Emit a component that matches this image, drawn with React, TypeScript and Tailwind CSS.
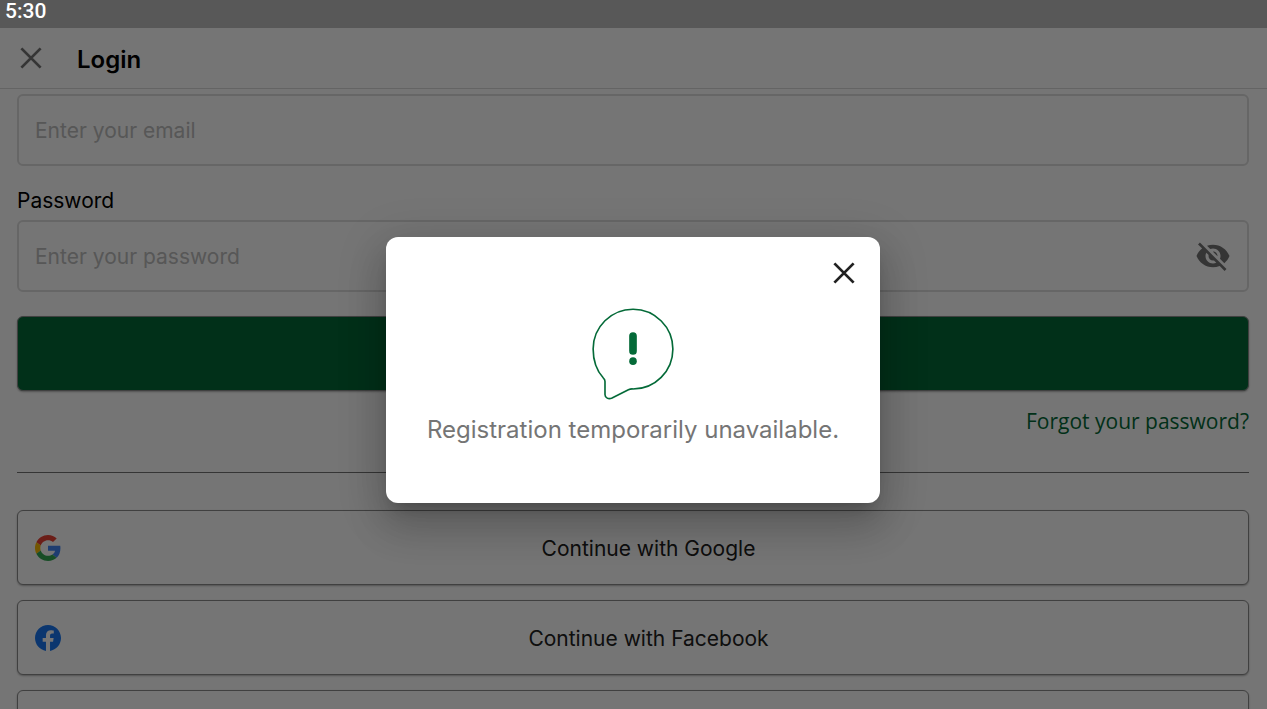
import { useState } from "react";
import type { ReactNode } from "react";

function CloseIcon({ className }: { className: string }) {
  return (
    <svg viewBox="0 0 24 24" className={className} fill="none" stroke="currentColor" strokeWidth="3" aria-hidden="true">
      <path d="M1.500 1.500 22.500 22.500M22.500 1.500 1.500 22.500" />
    </svg>
  );
}

function EyeOffIcon() {
  return (
    <svg viewBox="0 0 24 24" className="size-9" fill="currentColor" aria-hidden="true">
      <path d="M12 7c2.76 0 5 2.24 5 5 0 .65-.13 1.26-.36 1.83l2.92 2.92c1.51-1.26 2.7-2.89 3.43-4.75-1.73-4.39-6-7.5-11-7.5-1.4 0-2.74.25-3.98.7l2.16 2.16C10.74 7.13 11.35 7 12 7zM2 4.27l2.28 2.28.46.46C3.08 8.3 1.78 10.02 1 12c1.73 4.39 6 7.5 11 7.5 1.55 0 3.03-.3 4.38-.84l.42.42L19.73 22 21 20.73 3.27 3 2 4.27zM7.53 9.8l1.55 1.55c-.05.21-.08.43-.08.65 0 1.66 1.34 3 3 3 .22 0 .44-.03.65-.08l1.55 1.55c-.67.33-1.41.53-2.2.53-2.76 0-5-2.24-5-5 0-.79.2-1.53.53-2.2zm4.31-.78 3.15 3.15.02-.16c0-1.66-1.34-3-3-3l-.17.01z" />
    </svg>
  );
}

function GoogleIcon() {
  return (
    <svg viewBox="0 0 48 48" className="size-[26px]" aria-hidden="true">
      <path fill="#EA4335" d="M24 9.5c3.54 0 6.71 1.22 9.21 3.6l6.85-6.85C35.9 2.38 30.47 0 24 0 14.62 0 6.51 5.38 2.56 13.22l7.98 6.19C12.43 13.72 17.74 9.5 24 9.5z" />
      <path fill="#4285F4" d="M46.98 24.55c0-1.57-.15-3.09-.38-4.55H24v9.02h12.94c-.58 2.96-2.26 5.48-4.78 7.18l7.73 6c4.51-4.18 7.09-10.36 7.09-17.65z" />
      <path fill="#FBBC05" d="M10.53 28.59c-.48-1.45-.76-2.99-.76-4.59s.27-3.14.76-4.59l-7.98-6.19C.92 16.46 0 20.12 0 24c0 3.88.92 7.54 2.56 10.78l7.97-6.19z" />
      <path fill="#34A853" d="M24 48c6.48 0 11.93-2.13 15.89-5.81l-7.73-6c-2.15 1.45-4.92 2.3-8.16 2.3-6.26 0-11.57-4.22-13.47-9.91l-7.98 6.19C6.51 42.62 14.62 48 24 48z" />
    </svg>
  );
}

function FacebookIcon() {
  return (
    <svg viewBox="0 0 24 24" className="size-[26px] text-[#1877f2]" fill="currentColor" aria-hidden="true">
      <path d="M24 12.073c0-6.627-5.373-12-12-12s-12 5.373-12 12c0 5.99 4.388 10.954 10.125 11.854v-8.385H7.078v-3.47h3.047V9.43c0-3.007 1.792-4.669 4.533-4.669 1.312 0 2.686.235 2.686.235v2.953H15.83c-1.491 0-1.956.925-1.956 1.874v2.25h3.328l-.532 3.47h-2.796v8.385C19.612 23.027 24 18.062 24 12.073z" />
    </svg>
  );
}

function AlertBubble() {
  return (
    <svg viewBox="0 0 80 90" className="h-[92px] w-[82px] text-[#046a38]" fill="none" stroke="currentColor" aria-hidden="true">
      <path strokeWidth="1.6" strokeLinejoin="round" d="M11 68.500C4.700 61.500 1 51.500 1 40A39 39 0 1 1 40 79.200C38.200 79 37 79.300 35.500 80L19.500 88C16 89.600 12.600 88 12.600 84.500V72C12.600 70.500 12.200 69.500 11 68.500Z" />
      <path strokeWidth="7.500" strokeLinecap="round" d="M40 27.500V42" />
      <circle cx="40" cy="52" r="3.700" fill="currentColor" stroke="none" />
    </svg>
  );
}

function SocialButton({ label, icon }: { label: string; icon?: ReactNode }) {
  return (
    <button
      type="button"
      aria-label={label}
      className="flex h-[75px] w-full shrink-0 items-center rounded-md border border-[#8c8c8c] bg-white pr-4 pl-[17px] text-[21px] text-[#212121] shadow-[0_1px_2px_rgba(0,0,0,0.3)]"
    >
      <span className="flex w-[30px] shrink-0">{icon}</span>
      <span className="flex-1 pt-[2px] text-center">{icon ? label : null}</span>
    </button>
  );
}

const fieldClass =
  "h-[72px] w-full rounded-md border-2 border-[#dedede] bg-transparent px-4 text-[21px] text-black outline-none placeholder:text-[#bdbdbd]";

export default function App() {
  const [open, setOpen] = useState(true);

  return (
    <div className="relative flex h-screen flex-col overflow-hidden bg-white font-['Inter',sans-serif]">
      <div className="h-7 shrink-0 bg-[#bfbfbf] px-[5px]">
        <time className="relative z-20 block font-['Roboto',sans-serif] text-[21px] leading-[22px] font-medium text-white">
          5:30
        </time>
      </div>

      <header className="flex h-[61px] shrink-0 items-center gap-[35px] border-b border-[#d9d9d9] px-5">
        <button type="button" aria-label="Back" className="text-[#757575]">
          <CloseIcon className="size-[22px]" />
        </button>
        <h1 className="pt-[3px] text-2xl font-semibold text-black">Login</h1>
      </header>

      <main className="flex-1 overflow-hidden pt-[5px] pr-[18px] pl-[17px]">
        <form onSubmit={(event) => event.preventDefault()}>
          <input type="email" aria-label="Email" placeholder="Enter your email" className={fieldClass} />
          <label htmlFor="password" className="mt-[19px] mb-[3px] block text-[21px] leading-8 text-black">
            Password
          </label>
          <div className="relative">
            <input id="password" type="password" placeholder="Enter your password" className={fieldClass} />
            <button type="button" aria-label="Show password" className="absolute inset-y-0 right-[18px] text-[#757575]">
              <EyeOffIcon />
            </button>
          </div>
          <button
            type="submit"
            aria-label="Login"
            className="mt-6 block h-[75px] w-full rounded-md border border-[#8c8c8c] bg-[#046a38] shadow-[0_1px_2px_rgba(0,0,0,0.3)]"
          />
        </form>
        <div className="mt-[14px] flex justify-end">
          <a href="#forgot" className="font-['Open_Sans',sans-serif] text-[21px] leading-8 text-[#046a38]">
            Forgot your password?
          </a>
        </div>
        <hr className="mt-[35px] border-[#757575]" />
        <div className="mt-[37px] flex flex-col gap-[15px]">
          <SocialButton label="Continue with Google" icon={<GoogleIcon />} />
          <SocialButton label="Continue with Facebook" icon={<FacebookIcon />} />
          <SocialButton label="Continue with Apple" />
        </div>
      </main>

      {open && (
        <div className="absolute inset-0 z-10 flex items-center justify-center bg-black/54 pt-[31px] pr-px">
          <div
            role="dialog"
            aria-modal="true"
            aria-labelledby="dialog-message"
            className="flex flex-col items-center rounded-xl bg-white px-[41px] pt-[25px] pb-[57px] shadow-[0_11px_15px_-7px_rgba(0,0,0,0.2),0_24px_38px_3px_rgba(0,0,0,0.14),0_9px_46px_8px_rgba(0,0,0,0.12)]"
          >
            <button
              type="button"
              aria-label="Close"
              onClick={() => setOpen(false)}
              className="-mr-4 self-end text-[#212121]"
            >
              <CloseIcon className="size-[22px]" />
            </button>
            <div className="mt-6">
              <AlertBubble />
            </div>
            <p id="dialog-message" className="mt-[14px] text-2xl text-[#757575]">
              Registration temporarily unavailable.
            </p>
          </div>
        </div>
      )}
    </div>
  );
}
